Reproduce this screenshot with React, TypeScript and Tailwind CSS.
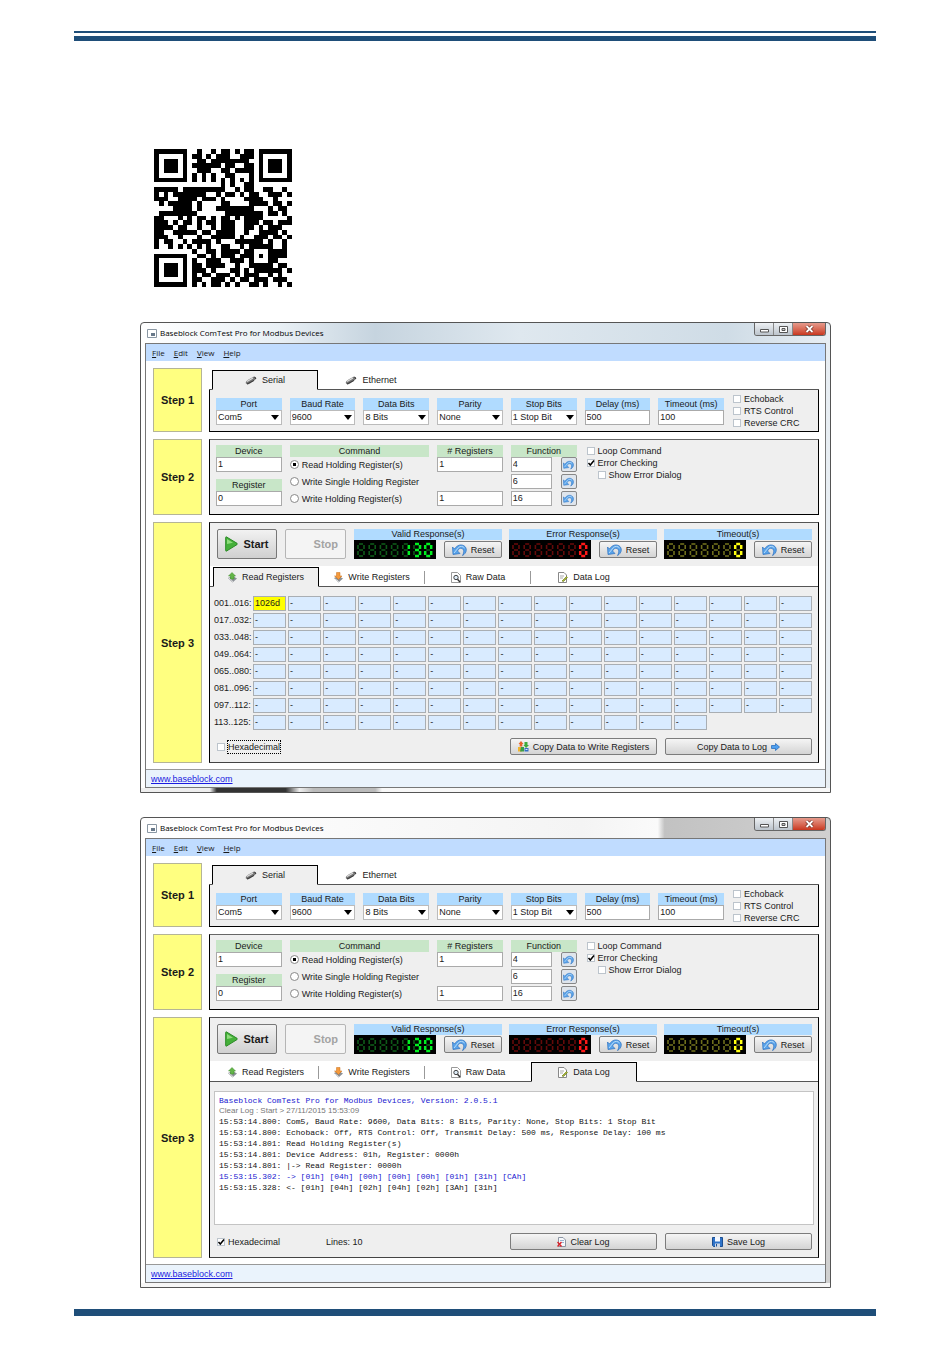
import React from 'react';

const QR_ROWS = [
  '11111110010010110101110111111',
  '10000010110101110011111001001',
  '10111010011011111111001011101',
  '10111010111111011001101011101',
  '10111010011100110111101011101',
  '10000010101010011000101000001',
  '11111110101010101010101111111',
  '00000000000000101001100000000',
  '11111011111111100101100110010',
  '10101111111001011010110011101',
  '11100111101110100001111001000',
  '01011111010000110000111101101',
  '00001111010001111111100010110',
  '01111111100000011111111011010',
  '11000101011010110101111000001',
  '11101011010110111001110110111',
  '11110110010010111001101011100',
  '11001111101101111001001111010',
  '11100100010011111010011101101',
  '10110010111101000111111010010',
  '10010101010100110010111110010',
  '00000000100110111101100011110',
  '11111110011010111011101011110',
  '10000010100111001110100011000',
  '10111010110111100100111110110',
  '10111010111010001101011111101',
  '10111010101101110101110010100',
  '10000010110011101011011101110',
  '11111110101011010100110100101',
].map((row, y) => {
  // top right finder pattern closes the first seven rows
  const finder = ['1111111', '1000001', '1011101', '1011101', '1011101', '1000001', '1111111'];
  return y < 7 ? `${row.slice(0, 21)}0${finder[y]}` : row;
});

const LOG_LINES = [
  { text: '15:53:14.800: Com5, Baud Rate: 9600, Data Bits: 8 Bits, Parity: None, Stop Bits: 1 Stop Bit', sent: false },
  { text: '15:53:14.800: Echoback: Off, RTS Control: Off, Transmit Delay: 500 ms, Response Delay: 100 ms', sent: false },
  { text: '15:53:14.801: Read Holding Register(s)', sent: false },
  { text: '15:53:14.801: Device Address: 01h, Register: 0000h', sent: false },
  { text: '15:53:14.801: |-> Read Register: 0000h', sent: false },
  { text: '15:53:15.302: -> [01h] [04h] [00h] [00h] [00h] [01h] [31h] [CAh]', sent: true },
  { text: '15:53:15.328: <- [01h] [04h] [02h] [04h] [02h] [3Ah] [31h]', sent: false },
];

const REGISTER_ROWS = ['001..016:', '017..032:', '033..048:', '049..064:', '065..080:', '081..096:', '097..112:', '113..125:'];

const QrCode = () => (
  <svg className="block h-[138px] w-[138px]" viewBox="0 0 29 29" shapeRendering="crispEdges" role="img" aria-label="QR code">
    {QR_ROWS.map((row, y) =>
      row.split('').map((cell, x) => (cell === '1' ? <rect key={`${x}-${y}`} x={x} y={y} width="1" height="1" /> : null))
    )}
  </svg>
);

// segment order: top, top right, bottom right, bottom, bottom left, top left, middle
const SEGMENTS = ['M2 1H6', 'M7 2V6', 'M7 8V12', 'M2 13H6', 'M1 8V12', 'M1 2V6', 'M2 7H6'];
const LIT: Record<string, number[]> = {
  ' ': [],
  '0': [0, 1, 2, 3, 4, 5],
  '1': [1, 2],
  '3': [0, 1, 2, 3, 6],
};

const Counter = ({ value, on, off }: { value: string; on: string; off: string }) => (
  <svg className="block h-[19px] w-[82px] shrink-0 bg-black" viewBox="0 0 82 19" role="img" aria-label={value.trim()}>
    {value.split('').map((digit, i) => (
      <g key={i} transform={`translate(${3 + i * 11.2} 3)`} fill="none">
        {SEGMENTS.map((d, s) => (
          <path key={s} d={d} stroke={LIT[digit].includes(s) ? on : off} strokeWidth={LIT[digit].includes(s) ? 2.5 : 1.6} />
        ))}
      </g>
    ))}
  </svg>
);

const PlugIcon = () => (
  <svg className="h-[9px] w-[12px]" viewBox="0 0 12 9">
    <path d="M1 7.500C0 6 2 4.500 4 3.200L8 1C9.500 .2 11.500 1 11 2.600L10 4C8 5.500 4 8.500 2.600 8.500Z" fill="#777" />
    <path d="M2 5.500L8 2" stroke="#ddd" strokeWidth="1.200" />
    <path d="M2 8L9 4.500M9.500 .8L11 3" stroke="#333" strokeWidth="1" />
  </svg>
);

const ReadIcon = () => (
  <svg className="h-[11px] w-[9px]" viewBox="0 0 9 11">
    <path d="M0 6L4.500 4L9 6.500L4.500 10.500Z" fill="#8b9096" />
    <path d="M1 6L4 8.500L4.500 10" stroke="#e5e5e5" fill="none" />
    <path d="M4 .5L7.500 4H6V7H2.500V4H.5Z" fill="#63b548" stroke="#3d8b2b" strokeWidth=".5" />
  </svg>
);

const WriteIcon = () => (
  <svg className="h-[11px] w-[9px]" viewBox="0 0 9 11">
    <path d="M0 6L4.500 4L9 6.500L4.500 10.500Z" fill="#8b9096" />
    <path d="M1 7L4 9L4.500 10" stroke="#e5e5e5" fill="none" />
    <path d="M2.500 .5H6V4H8L4.500 7.500L.5 4H2.500Z" fill="#f59a3c" stroke="#c66e19" strokeWidth=".5" />
  </svg>
);

const RawIcon = () => (
  <svg className="h-[11px] w-[10px]" viewBox="0 0 10 11">
    <path d="M.5 .5H6.500L9.500 3.500V10.500H.5Z" fill="#fff" stroke="#999" />
    <circle cx="5" cy="5.500" r="2.200" fill="#dceaf6" stroke="#444" />
    <path d="M6.500 7.200L9 10" stroke="#333" strokeWidth="1.400" />
  </svg>
);

const NoteIcon = () => (
  <svg className="h-[11px] w-[10px]" viewBox="0 0 10 11">
    <path d="M.5 .5H6L8.500 3V10.500H.5Z" fill="#fff" stroke="#888" />
    <path d="M2 4H6M2 6H5" stroke="#aaa" />
    <path d="M4 9L8.500 4.500L9.500 5.500L5.500 9.500Z" fill="#a5b733" stroke="#667215" strokeWidth=".6" />
  </svg>
);

const UndoIcon = ({ className }: { className: string }) => (
  <svg className={className} viewBox="0 0 15 12">
    <path d="M.5 3L2.500 5C5 1 9 0 12 1.800C15.500 4 15 9 10.500 11.500C12.500 8 12 5.500 10 4.500C8.200 3.700 6.500 5 5.500 7L8 9.500L1 10.500Z" fill="#5aa4ea" stroke="#2a6fc0" strokeWidth=".7" />
    <path d="M2 9L6.500 3.500C8 2 11 2 12.500 4" stroke="#b9dcfa" strokeWidth="1" fill="none" />
  </svg>
);

const PlayIcon = () => (
  <svg className="h-[16px] w-[13px]" viewBox="0 0 13 16">
    <path d="M.7 1.500Q.7 .5 1.600 1L12 7.300Q12.700 8 12 8.600L1.600 15Q.7 15.500 .7 14.500Z" fill="#45b03a" stroke="#2b8a26" />
    <path d="M2 3L8 6.800L2 8Z" fill="#8fdc7c" />
  </svg>
);

const CopyIcon = () => (
  <svg className="h-[11px] w-[11px]" viewBox="0 0 11 11">
    <path d="M3 0L5.500 3H4.300V5.500H1.700V3H.5Z" fill="#e8622c" />
    <path d="M6.500 1H9.500V4H11L8 7L5.500 4H6.500Z" fill="#3faa3c" />
    <path d="M0 6H4V10.500H0Z" fill="#f0b42e" />
    <path d="M3 6H6V10.500H2Z" fill="#3b9d48" />
    <path d="M6.500 7H10.500V10.500H6.500Z" fill="#3470c4" />
    <path d="M7.500 8H9.500V9H7.500Z" fill="#dbe9ff" />
  </svg>
);

const ArrowIcon = () => (
  <svg className="h-[8px] w-[9px]" viewBox="0 0 9 8">
    <path d="M.5 2.500H4.500V.5L8.500 4L4.500 7.500V5.500H.5Z" fill="#4d9ff0" stroke="#1c64b8" strokeWidth=".7" />
  </svg>
);

const ClearIcon = () => (
  <svg className="h-[10px] w-[9px]" viewBox="0 0 9 10">
    <path d="M1.500 .5H6L8.500 3V9.500H1.500Z" fill="#f6f8fb" stroke="#8b95a3" />
    <path d="M3 3.500H7M5 5.500H7" stroke="#9ab3d0" />
    <path d="M.5 5L4.500 9.500M4.500 5L.5 9.500" stroke="#d8262c" strokeWidth="1.500" />
  </svg>
);

const SaveIcon = () => (
  <svg className="h-[10px] w-[11px]" viewBox="0 0 11 10">
    <path d="M.5 .5H10.500V9.500H1.500L.5 8.500Z" fill="#2f73c8" stroke="#1d4f91" />
    <path d="M3 0H8V4.500H3Z" fill="#f4f8ff" />
    <path d="M3 6.500H8V10H3Z" fill="#cfd8e4" />
    <path d="M4.500 7V9.500" stroke="#1d4f91" />
  </svg>
);

const FieldLabel = ({ htmlFor, color, children }: { htmlFor?: string; color: 'blue' | 'green'; children: React.ReactNode }) => (
  <label
    htmlFor={htmlFor}
    className={`block h-[12px] overflow-hidden text-center leading-[12px] whitespace-nowrap ${color === 'blue' ? 'bg-[#b0dbff]' : 'bg-[#c8e6c8]'}`}
  >
    {children}
  </label>
);

const TextField = ({ id, value, label }: { id: string; value: string; label?: string }) => (
  <input
    id={id}
    aria-label={label}
    defaultValue={value}
    className="block h-[15px] w-full min-w-0 border border-[#aaa] bg-white px-px pb-[2px] text-[9px] leading-[11px] outline-none"
  />
);

const SelectField = ({ id, label, value }: { id: string; label: string; value: string }) => (
  <div>
    <FieldLabel htmlFor={id} color="blue">{label}</FieldLabel>
    <div className="relative">
      <select id={id} className="block h-[15px] w-full appearance-none border border-[#bbb] bg-white px-px text-[9px] leading-[13px] outline-none">
        <option>{value}</option>
      </select>
      <svg className="pointer-events-none absolute top-[5px] right-[3px] h-[5px] w-[8px]" viewBox="0 0 8 5">
        <path d="M0 0H8L4 5Z" fill="#000" />
      </svg>
    </div>
  </div>
);

const CheckField = ({ label, checked, focused }: { label: string; checked?: boolean; focused?: boolean }) => (
  <label className="flex h-[12px] items-center gap-[3px] whitespace-nowrap">
    <span className="relative block h-[8px] w-[8px]">
      <input type="checkbox" defaultChecked={checked} className="peer block h-[8px] w-[8px] appearance-none border border-[#bcc4cc] bg-white" />
      <svg className="pointer-events-none absolute top-0 left-0 hidden h-[8px] w-[8px] peer-checked:block" viewBox="0 0 8 8">
        <path d="M1.500 4L3.300 6L7 1.500" stroke="#000" strokeWidth="1.500" fill="none" />
      </svg>
    </span>
    <span className={focused ? 'outline-1 outline-dotted outline-black' : ''}>{label}</span>
  </label>
);

const RadioField = ({ name, label, checked }: { name: string; label: string; checked?: boolean }) => (
  <label className="flex h-[15px] items-center gap-[3px] whitespace-nowrap">
    <input
      type="radio"
      name={name}
      defaultChecked={checked}
      className="block h-[9px] w-[9px] shrink-0 appearance-none rounded-full border border-[#888] bg-white checked:bg-[radial-gradient(circle,#000_0,#000_30%,#fff_40%)]"
    />
    {label}
  </label>
);

const Step = ({ title, children }: { title: string; children: React.ReactNode }) => (
  <section className="flex gap-[7px]">
    <h2 className="flex w-[49px] shrink-0 items-center justify-center border border-[#b5b596] bg-[#ffff80] text-[11px] font-bold">
      {title}
    </h2>
    <div className="min-w-0 flex-1">{children}</div>
  </section>
);

const Tab = ({ icon, label, active, divider }: { icon: React.ReactNode; label: string; active?: boolean; divider?: boolean }) => (
  <button
    type="button"
    role="tab"
    aria-selected={!!active}
    className={`flex h-[20px] w-[106px] items-center justify-center gap-[5px] border-y whitespace-nowrap ${
      active ? 'border-x border-x-black border-t-black border-b-[#efefef] bg-[#efefef]' : 'border-t-transparent border-b-[#555]'
    }`}
  >
    {icon}
    {label}
    {divider && <span className="absolute h-[13px] w-px translate-x-[52px] bg-[#999]" />}
  </button>
);

const PushButton = ({ children, className }: { children: React.ReactNode; className: string }) => (
  <button
    type="button"
    className={`flex h-[17px] items-center justify-center rounded-[2px] border border-[#7c7c7c] bg-linear-to-b from-[#f5f5f5] to-[#d4d4d4] whitespace-nowrap ${className}`}
  >
    {children}
  </button>
);

const CounterGroup = ({ label, value, on, off }: { label: string; value: string; on: string; off: string }) => (
  <div className="min-w-0 flex-1">
    <p className="h-[11px] bg-[#b0dbff] text-center leading-[11px]">{label}</p>
    <div className="flex items-center justify-between">
      <Counter value={value} on={on} off={off} />
      <PushButton className="w-[58px] gap-[4px]">
        <UndoIcon className="h-[12px] w-[15px]" />
        Reset
      </PushButton>
    </div>
  </div>
);

const RegisterTable = () => (
  <table className="w-full table-fixed border-separate border-spacing-[2px]">
    <tbody>
      {REGISTER_ROWS.map((label, row) => (
        <tr key={label} className="h-[15px]">
          <th scope="row" className="w-[37px] p-0 text-left font-normal leading-[13px] whitespace-nowrap">{label}</th>
          {Array.from({ length: 16 }, (_, col) =>
            row === 7 && col > 12 ? (
              <td key={col} />
            ) : (
              <td
                key={col}
                className={`border border-[#a9aeb3] p-0 pl-px leading-[13px] ${row === 0 && col === 0 ? 'bg-[#ffff00]' : 'bg-[#d9ebff]'}`}
              >
                {row === 0 && col === 0 ? '1026d' : '-'}
              </td>
            )
          )}
        </tr>
      ))}
    </tbody>
  </table>
);

const DataLog = () => (
  <div className="h-[134px] border border-[#c4c4c4] bg-white px-[4px] pt-[4px] font-['Liberation_Mono',monospace] text-[8px] leading-[11px] whitespace-pre">
    <p className="leading-[10px] text-[#1818d0]">Baseblock ComTest Pro for Modbus Devices, Version: 2.0.5.1</p>
    <p className="font-['Liberation_Sans',sans-serif] leading-[10px] text-[#777]">Clear Log : Start &gt; 27/11/2015 15:53:09</p>
    {LOG_LINES.map((line) => (
      <p key={line.text} className={line.sent ? 'text-[#1818d0]' : 'text-[#111]'}>{line.text}</p>
    ))}
  </div>
);

const ComTestWindow = ({ id, view }: { id: string; view: 'registers' | 'log' }) => {
  const isLog = view === 'log';

  return (
    <div
      className={`rounded-t-[4px] border border-[#555] ${
        isLog
          ? 'bg-[linear-gradient(90deg,#fff_0,#f4f4f4_64%,#fafafa_75%,#c2c2c2_76%,#d0d0d0_100%)]'
          : 'bg-[linear-gradient(90deg,#fff_0,#e9f0f5_20%,#c6d4df_34%,#dfe8ef_55%,#cfdce6_85%,#e8eef3_100%)]'
      }`}
    >
      <div className="flex h-[20px] items-start justify-between px-[4px]">
        <div className="flex h-[20px] items-center gap-[3px] pl-[2px] font-['Open_Sans',sans-serif] text-[8px] text-black">
          <svg className="h-[9px] w-[10px]" viewBox="0 0 10 9">
            <path d="M.5 .5H9.500V8.500H.5Z" fill="#fff" stroke="#8a97a3" />
            <path d="M4 4H8V7H4Z" fill="#68798a" />
          </svg>
          Baseblock ComTest Pro for Modbus Devices
        </div>
        <div className="flex h-[13px] overflow-hidden rounded-b-[3px] border border-t-0 border-[#666]">
          <button type="button" aria-label="Minimize" className="flex w-[19px] items-center justify-center border-r border-[#888] bg-linear-to-b from-[#eef1f4] to-[#bcc4cc]">
            <svg className="h-[8px] w-[9px]" viewBox="0 0 9 8"><path d="M.5 4.500H8.500V7H.5Z" fill="#fff" stroke="#555" /></svg>
          </button>
          <button type="button" aria-label="Maximize" className="flex w-[19px] items-center justify-center border-r border-[#888] bg-linear-to-b from-[#eef1f4] to-[#bcc4cc]">
            <svg className="h-[7px] w-[9px]" viewBox="0 0 9 7"><path d="M.5 .5H8.500V6.500H.5Z" fill="#fff" stroke="#555" /><path d="M3 2.500H6V4.500H3Z" fill="#ccc" stroke="#555" /></svg>
          </button>
          <button type="button" aria-label="Close" className="flex w-[32px] items-center justify-center bg-linear-to-b from-[#e59a8c] to-[#c8351c]">
            <svg className="h-[8px] w-[9px]" viewBox="0 0 9 8"><path d="M1.500 1L7.500 7M7.500 1L1.500 7" stroke="#6b2a20" strokeWidth="3.200" /><path d="M1.500 1L7.500 7M7.500 1L1.500 7" stroke="#fff" strokeWidth="1.800" /></svg>
          </button>
        </div>
      </div>

      <div className="mx-[4px] border border-[#777] bg-white">
        <nav className="flex h-[17px] items-center gap-[9px] bg-[#c0dcff] pl-[6px] font-['Open_Sans',sans-serif] text-[8px]">
          <button type="button"><u>F</u>ile</button>
          <button type="button"><u>E</u>dit</button>
          <button type="button"><u>V</u>iew</button>
          <button type="button"><u>H</u>elp</button>
        </nav>

        <div className="flex flex-col gap-[7px] pt-[7px] pr-[6px] pb-[6px] pl-[7px]">
          <Step title="Step 1">
            <div className="flex pt-[2px]" role="tablist">
              <span className="w-[3px] border-b border-[#555]" />
              <Tab icon={<PlugIcon />} label="Serial" active />
              <Tab icon={<PlugIcon />} label="Ethernet" />
              <span className="flex-1 border-b border-[#555]" />
            </div>
            <div className="flex gap-[9px] border-x border-b border-black bg-[#efefef] pt-[3px] pr-[6px] pb-[2px] pl-[6px]">
              <div className="grid min-w-0 flex-1 grid-cols-7 gap-x-2 pt-[5px]">
                <SelectField id={`${id}-port`} label="Port" value="Com5" />
                <SelectField id={`${id}-baud`} label="Baud Rate" value="9600" />
                <SelectField id={`${id}-bits`} label="Data Bits" value="8 Bits" />
                <SelectField id={`${id}-parity`} label="Parity" value="None" />
                <SelectField id={`${id}-stop`} label="Stop Bits" value="1 Stop Bit" />
                <div>
                  <FieldLabel htmlFor={`${id}-delay`} color="blue">Delay (ms)</FieldLabel>
                  <TextField id={`${id}-delay`} value="500" />
                </div>
                <div>
                  <FieldLabel htmlFor={`${id}-timeout`} color="blue">Timeout (ms)</FieldLabel>
                  <TextField id={`${id}-timeout`} value="100" />
                </div>
              </div>
              <div className="w-[79px]">
                <CheckField label="Echoback" />
                <CheckField label="RTS Control" />
                <CheckField label="Reverse CRC" />
              </div>
            </div>
          </Step>

          <Step title="Step 2">
            <div className="flex gap-[9px] border border-t-[#666] border-r-black border-b-black border-l-black bg-[#efefef] pt-[5px] pr-[6px] pb-[8px] pl-[6px]">
              <div className="grid min-w-0 flex-1 grid-cols-7 gap-x-2">
                <div>
                  <FieldLabel htmlFor={`${id}-device`} color="green">Device</FieldLabel>
                  <TextField id={`${id}-device`} value="1" />
                  <div className="pt-[7px]">
                    <FieldLabel htmlFor={`${id}-register`} color="green">Register</FieldLabel>
                    <TextField id={`${id}-register`} value="0" />
                  </div>
                </div>
                <div className="col-span-2" role="radiogroup" aria-label="Command">
                  <p className="h-[12px] bg-[#c8e6c8] text-center leading-[12px]">Command</p>
                  <div className="flex flex-col gap-[2px]">
                    <RadioField name={`${id}-command`} label="Read Holding Register(s)" checked />
                    <RadioField name={`${id}-command`} label="Write Single Holding Register" />
                    <RadioField name={`${id}-command`} label="Write Holding Register(s)" />
                  </div>
                </div>
                <div>
                  <FieldLabel htmlFor={`${id}-count-read`} color="green"># Registers</FieldLabel>
                  <div className="flex flex-col gap-[19px]">
                    <TextField id={`${id}-count-read`} value="1" />
                    <TextField id={`${id}-count-write`} label="Registers to write" value="1" />
                  </div>
                </div>
                <div>
                  <p className="h-[12px] bg-[#c8e6c8] text-center leading-[12px]">Function</p>
                  <div className="flex flex-col gap-[2px]">
                    {['4', '6', '16'].map((code) => (
                      <div key={code} className="flex justify-between">
                        <div className="w-[41px]">
                          <TextField id={`${id}-function-${code}`} label={`Function ${code}`} value={code} />
                        </div>
                        <button type="button" aria-label={`Reset function ${code}`} className="flex h-[15px] w-[16px] items-center justify-center rounded-[2px] border border-[#888] bg-[#dfe5ec]">
                          <UndoIcon className="h-[10px] w-[11px]" />
                        </button>
                      </div>
                    ))}
                  </div>
                </div>
                <div className="col-span-2 pl-[2px]">
                  <CheckField label="Loop Command" />
                  <CheckField label="Error Checking" checked />
                  <div className="pl-[11px]">
                    <CheckField label="Show Error Dialog" />
                  </div>
                </div>
              </div>
              <div className="w-[79px]" />
            </div>
          </Step>

          <Step title="Step 3">
            <div className="border border-t-[#555] border-r-black border-b-[#444] border-l-black bg-[#efefef]">
              <div className="flex gap-[8px] pt-[6px] pr-[6px] pb-[7px] pl-[7px]">
                <button type="button" className="flex h-[30px] w-[60px] items-center justify-center gap-[5px] rounded-[2px] border border-[#777] bg-linear-to-b from-[#f2f2f2] to-[#d0d0d0] text-[11px] font-bold">
                  <PlayIcon />
                  Start
                </button>
                <button type="button" disabled className="flex h-[30px] w-[61px] items-center justify-end rounded-[2px] border border-[#b5b5b5] bg-[#f4f4f4] pr-[7px] text-[11px] font-bold text-[#a3a3a3]">
                  Stop
                </button>
                <div className="flex min-w-0 flex-1 gap-[7px]">
                  <CounterGroup label="Valid Response(s)" value="    130" on="#00f020" off="#0e5a18" />
                  <CounterGroup label="Error Response(s)" value="      0" on="#ff1818" off="#640a0a" />
                  <CounterGroup label="Timeout(s)" value="      0" on="#ffff10" off="#6e6e1c" />
                </div>
              </div>

              <div className="flex bg-white pt-px" role="tablist">
                <span className="w-[3px] border-b border-[#555]" />
                <Tab icon={<ReadIcon />} label="Read Registers" active={!isLog} divider={isLog} />
                <Tab icon={<WriteIcon />} label="Write Registers" divider />
                <Tab icon={<RawIcon />} label="Raw Data" divider={!isLog} />
                <Tab icon={<NoteIcon />} label="Data Log" active={isLog} />
                <span className="flex-1 border-b border-[#555]" />
              </div>

              {isLog ? (
                <div className="px-[4px] pt-[9px] pb-[2px]">
                  <DataLog />
                </div>
              ) : (
                <div className="pt-[7px] pr-[4px] pl-[2px]">
                  <RegisterTable />
                </div>
              )}

              <div className="flex items-center pt-[6px] pr-[6px] pb-[7px] pl-[7px]">
                <div className="w-[109px]">
                  <CheckField label="Hexadecimal" checked={isLog} focused={!isLog} />
                </div>
                {isLog && <p>Lines: 10</p>}
                <div className="ml-auto flex gap-[8px]">
                  <PushButton className="w-[147px] gap-[4px]">
                    {isLog ? <ClearIcon /> : <CopyIcon />}
                    {isLog ? 'Clear Log' : 'Copy Data to Write Registers'}
                  </PushButton>
                  <PushButton className="w-[147px] gap-[4px]">
                    {isLog && <SaveIcon />}
                    {isLog ? 'Save Log' : 'Copy Data to Log'}
                    {!isLog && <ArrowIcon />}
                  </PushButton>
                </div>
              </div>
            </div>
          </Step>
        </div>

        <footer className="flex h-[18px] items-center border-t border-[#999] bg-[#eaf3fc] pl-[5px]">
          <a href="#baseblock" className="text-[#1a1ae0] underline">www.baseblock.com</a>
        </footer>
      </div>
      <div
        className={`h-[4px] ${
          isLog ? 'bg-[#f6f6f6]' : 'bg-[linear-gradient(90deg,#eee_0,#eee_10%,#333_11%,#333_21%,#eee_23%,#bbb_25%,#bbb_34%,#f8f8f8_35%)]'
        }`}
      />
    </div>
  );
};

const App: React.FC = () => {
  return (
    <div className="bg-white px-[74px] pt-[31px] pb-[44px] font-['Liberation_Sans',Arial,sans-serif] text-[9px] leading-[12px] text-[#1a1a1a]">
      <header>
        <div className="h-[2px] bg-[#1f4e79]" />
        <div className="mt-[3px] h-[5px] bg-[#1f4e79]" />
      </header>

      <main className="pt-[108px]">
        <div className="pl-[80px]">
          <QrCode />
        </div>
        <div className="flex flex-col gap-[24px] pt-[35px] pr-[45px] pl-[66px]">
          <ComTestWindow id="first" view="registers" />
          <ComTestWindow id="second" view="log" />
        </div>
      </main>

      <div className="mt-[21px] h-[7px] bg-[#1f4e79]" />
    </div>
  );
};

export default App;
